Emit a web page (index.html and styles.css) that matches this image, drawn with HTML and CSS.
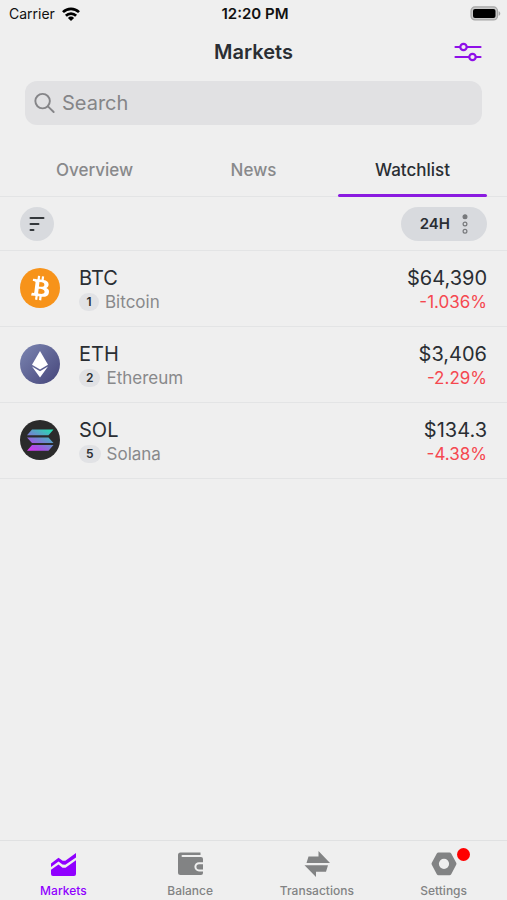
FILE: index.html
```html
<!DOCTYPE html>
<html lang="en">
<head>
<meta charset="utf-8">
<meta name="viewport" content="width=device-width, initial-scale=1">
<title>Markets</title>
<link rel="stylesheet" href="styles.css">
</head>
<body>
<div class="app">
  <div class="status">
    <div class="carrier">Carrier
      <svg class="wifi" width="18" height="14" viewBox="0 0 18 14" fill="none" stroke="#000" stroke-width="2.700"><path d="M1 5.100a11.500 11.500 0 0 1 16 0M3.900 8.700a7.200 7.200 0 0 1 10.200 0"/><path d="M9 14 5.900 10.900a4.400 4.400 0 0 1 6.200 0z" fill="#000" stroke="none"/></svg>
    </div>
    <div class="time">12:20 PM</div>
    <svg class="battery" width="31" height="15" viewBox="0 0 31 15"><rect x="1" y=".9" width="26.500" height="13" rx="4" fill="#c9c9c9" stroke="#a6a6a6" stroke-width="1.200"/><rect x="3" y="3" width="22.500" height="9" rx="2" fill="#000"/><path d="M28.600 5.200c2.200.7 2.200 3.900 0 4.600z" fill="#a6a6a6"/></svg>
  </div>

  <header class="header">
    <h1>Markets</h1>
    <button class="filter" aria-label="Filters">
      <svg width="28" height="20" viewBox="0 0 28 20" fill="none" stroke="#8f0fe8" stroke-width="2.200" stroke-linecap="round"><path d="M1.500 5H6M13 5h13.500M1.500 15H15M22 15h4.500"/><circle cx="9.500" cy="5" r="3.200"/><circle cx="18.500" cy="15" r="3.200"/></svg>
    </button>
  </header>

  <label class="search">
    <svg width="21" height="22" viewBox="0 0 22 22" fill="none" stroke="#858588" stroke-width="2" stroke-linecap="round"><circle cx="9" cy="9" r="7.600"/><path d="m14.600 14.600 6 5.800"/></svg>
    <input type="search" placeholder="Search" aria-label="Search">
  </label>

  <nav class="tabs">
    <a href="#overview">Overview</a>
    <a href="#news">News</a>
    <a href="#watchlist" class="active" aria-current="page">Watchlist</a>
  </nav>

  <div class="toolbar">
    <button class="sort" aria-label="Sort">
      <svg width="16" height="16" viewBox="0 0 16 16" stroke="#34383c" stroke-width="2.200" stroke-linecap="round"><path d="M1.600 2h12.800M1.600 8h7.800M1.600 14h2.800"/></svg>
    </button>
    <button class="period">24H
      <svg width="6" height="20" viewBox="0 0 6 20" fill="none" stroke="#77797c" stroke-width="1.200"><circle cx="3" cy="2.700" r="1.900" fill="#77797c"/><circle cx="3" cy="10" r="1.900"/><circle cx="3" cy="17.300" r="1.900"/></svg>
    </button>
  </div>

  <main>
    <ul class="coins">
      <li class="coin">
        <svg class="logo" viewBox="0 0 32 32"><circle cx="16" cy="16" r="16" fill="#f7931a"/><path fill="#fff" transform="rotate(-7 16 16)" d="M23.189 14.020c.314-2.096-1.283-3.223-3.465-3.975l.708-2.840-1.728-.430-.690 2.765c-.454-.114-.920-.220-1.385-.326l.695-2.783L15.596 6l-.708 2.839c-.376-.086-.746-.170-1.104-.260l.002-.009-2.384-.595-.460 1.846s1.283.294 1.256.312c.700.175.826.638.805 1.006l-.806 3.235c.048.012.110.030.180.057l-.183-.045-1.130 4.532c-.086.212-.303.531-.793.410.018.025-1.256-.313-1.256-.313l-.858 1.978 2.250.561c.418.105.828.215 1.231.318l-.715 2.872 1.727.430.708-2.840c.472.127.930.245 1.378.357l-.706 2.828 1.728.430.715-2.866c2.948.558 5.164.333 6.097-2.333.752-2.146-.037-3.385-1.588-4.192 1.130-.260 1.980-1.003 2.207-2.538zm-3.950 5.538c-.533 2.147-4.148.986-5.320.695l.950-3.805c1.172.293 4.929.872 4.370 3.110zm.535-5.569c-.487 1.953-3.495.960-4.470.717l.860-3.450c.975.243 4.118.696 3.610 2.733z"/></svg>
        <div class="name"><strong>BTC</strong><span class="sub"><span class="rank">1</span>Bitcoin</span></div>
        <div class="value"><strong>$64,390</strong><span class="change">-1.036%</span></div>
      </li>
      <li class="coin">
        <svg class="logo" viewBox="0 0 40 40"><defs><linearGradient id="eth" x1="0" y1="0" x2="1" y2="1"><stop offset="0" stop-color="#7c86b2"/><stop offset="1" stop-color="#45457a"/></linearGradient></defs><circle cx="20" cy="20" r="20" fill="url(#eth)"/><path fill="#fff" d="M20 7 28 20.800 20 25.400 12 20.800z"/><path fill="#fff" d="m12 22.600 8 4.600 8-4.600-8 10.900z"/></svg>
        <div class="name"><strong>ETH</strong><span class="sub"><span class="rank">2</span>Ethereum</span></div>
        <div class="value"><strong>$3,406</strong><span class="change">-2.29%</span></div>
      </li>
      <li class="coin">
        <svg class="logo" viewBox="0 0 40 40"><defs><linearGradient id="sol" gradientUnits="userSpaceOnUse" x1="29" y1="8" x2="15" y2="33"><stop offset="0" stop-color="#22e0b0"/><stop offset=".5" stop-color="#6f88d0"/><stop offset=".8" stop-color="#a94fe6"/><stop offset="1" stop-color="#d438f0"/></linearGradient></defs><circle cx="20" cy="20" r="20" fill="#2b2b2b"/><path fill="url(#sol)" d="M12 9.500h21.500l-5 5.700h-21.500zM7 17.400h21.500l5 5.500H12zM12 25.100h21.500l-5 5.700h-21.500z"/></svg>
        <div class="name"><strong>SOL</strong><span class="sub"><span class="rank">5</span>Solana</span></div>
        <div class="value"><strong>$134.3</strong><span class="change">-4.38%</span></div>
      </li>
    </ul>
  </main>

  <nav class="bottom">
    <a href="#markets" class="active" aria-current="page">
      <span class="icon"><svg width="26" height="26" viewBox="0 0 26 26" fill="currentColor"><path d="M1 11.500 8.500 5.800l4.200 2.900 2.600.1L26 1v4.500l-10.700 7.200-2.800-.2L8.500 9.400 1 15z"/><path d="M1 17.800 8.500 12.500l4 3.200h3L26 8.200V22a2 2 0 0 1-2 2H3a2 2 0 0 1-2-2z"/></svg></span>
      Markets
    </a>
    <a href="#balance">
      <span class="icon"><svg width="26" height="26" viewBox="0 0 26 26" fill="currentColor"><path d="M3.500.5h20V3H5.500a1 1 0 0 0 0 2H24a2 2 0 0 1 2 2v3.200h-4a4.600 4.600 0 0 0 0 9.200h4V21a2 2 0 0 1-2 2H3.500A2.500 2.500 0 0 1 1 20.500V3A2.500 2.500 0 0 1 3.500.5z"/><path d="M22 12.200h4v5.200h-4a2.600 2.600 0 0 1 0-5.200z"/></svg></span>
      Balance
    </a>
    <a href="#transactions">
      <span class="icon"><svg width="26" height="26" viewBox="0 0 26 26" fill="currentColor"><path d="M2.500 11 4.500 4.500h10V-1L26 11z"/><path d="M24 13.200 22 19.800H12v5.200L.5 13.200z"/></svg></span>
      Transactions
    </a>
    <a href="#settings">
      <span class="icon"><svg width="26" height="26" viewBox="0 0 26 26" fill="currentColor"><path fill-rule="evenodd" d="M7.500.5h11a2 2 0 0 1 1.700 1l5 9.300a2 2 0 0 1 0 2l-5 9.400a2 2 0 0 1-1.700 1h-11a2 2 0 0 1-1.700-1l-5-9.400a2 2 0 0 1 0-2l5-9.300a2 2 0 0 1 1.700-1zM13 6.700a5.100 5.100 0 1 0 0 10.200 5.100 5.100 0 0 0 0-10.200z"/></svg><span class="dot"></span></span>
      Settings
    </a>
  </nav>
</div>
</body>
</html>
```

FILE: styles.css
```css
* {
  box-sizing: border-box;
}

body {
  margin: 0;
  background: #efefef;
  color: #2a2e33;
  font-family: Inter, "Liberation Sans", sans-serif;
}

button {
  border: 0;
  padding: 0;
  background: none;
  color: inherit;
  font: inherit;
}

a {
  color: inherit;
  text-decoration: none;
}

svg {
  display: block;
  flex: none;
  overflow: visible;
}

.app {
  display: flex;
  flex-direction: column;
  min-height: 100vh;
}

.status {
  display: grid;
  grid-template-columns: 1fr auto 1fr;
  align-items: center;
  height: 27px;
  padding: 0 6px 0 9px;
  color: #111;
  font-size: 14px;
}

.carrier {
  display: flex;
  align-items: center;
  gap: 7px;
}

.time {
  font-size: 15px;
  font-weight: 600;
}

.battery {
  justify-self: end;
}

.header {
  display: grid;
  grid-template-columns: 1fr auto 1fr;
  align-items: center;
  height: 50px;
  padding: 0 25px;
}

.header h1 {
  grid-column: 2;
  margin: 0;
  font-size: 20px;
  font-weight: 600;
}

.filter {
  justify-self: end;
}

.search {
  display: flex;
  align-items: center;
  gap: 7px;
  height: 44px;
  margin: 4px 25px 0;
  padding: 0 9px;
  border-radius: 12px;
  background: #e1e1e3;
}

.search input {
  flex: 1;
  min-width: 0;
  padding: 0;
  border: 0;
  outline: 0;
  background: none;
  color: inherit;
  font: inherit;
  font-size: 20px;
}

.search input::placeholder {
  color: #858588;
  opacity: 1;
}

.tabs {
  display: grid;
  grid-template-columns: repeat(3, 1fr);
  gap: 10px;
  height: 72px;
  padding: 0 20px;
  border-bottom: 1px solid #e3e4e5;
  color: #88898b;
  font-size: 17px;
  font-weight: 500;
}

.tabs a {
  position: relative;
  display: flex;
  align-items: center;
  justify-content: center;
  height: 72px;
  padding-top: 18px;
}

.tabs .active {
  color: #2a2e33;
}

.tabs .active::after {
  content: "";
  position: absolute;
  inset: auto 0 0;
  height: 3px;
  border-radius: 2px;
  background: #8a1be0;
}

.toolbar {
  display: flex;
  align-items: center;
  justify-content: space-between;
  height: 54px;
  padding: 0 20px;
  border-bottom: 1px solid #e3e4e5;
}

.sort {
  display: grid;
  place-items: center;
  width: 34px;
  height: 34px;
  border-radius: 50%;
  background: #d8dade;
}

.period {
  display: flex;
  align-items: center;
  gap: 12px;
  height: 34px;
  padding: 0 19px;
  border-radius: 17px;
  background: #d8dade;
  font-size: 15px;
  font-weight: 600;
}

main {
  flex: 1;
}

.coins {
  margin: 0;
  padding: 0;
  list-style: none;
}

.coin {
  display: flex;
  align-items: center;
  gap: 19px;
  padding: 13px 20px 14px;
  border-bottom: 1px solid #e3e4e5;
}

.logo {
  width: 40px;
  height: 40px;
}

.name,
.value {
  display: flex;
  flex-direction: column;
}

.value {
  align-items: flex-end;
  margin-left: auto;
}

.coin strong {
  font-size: 20px;
  font-weight: 400;
  line-height: 28px;
}

.sub,
.change {
  display: flex;
  align-items: center;
  font-size: 17px;
  line-height: 20px;
}

.sub {
  gap: 6px;
  color: #88898b;
}

.change {
  color: #f5484f;
}

.rank {
  min-width: 20px;
  padding: 0 7px;
  border-radius: 9px;
  background: #e1e2e5;
  color: #2a2e33;
  font-size: 12px;
  font-weight: 600;
  line-height: 18px;
  text-align: center;
}

.bottom {
  position: sticky;
  bottom: 0;
  display: grid;
  grid-template-columns: repeat(4, 1fr);
  height: 60px;
  padding-top: 11px;
  border-top: 1px solid #e0e1e2;
  background: #efefef;
  color: #828384;
  font-size: 12px;
  font-weight: 500;
}

.bottom a {
  display: flex;
  flex-direction: column;
  align-items: center;
  gap: 5px;
  line-height: 16px;
}

.bottom .active {
  color: #9000ff;
}

.icon {
  position: relative;
}

.dot {
  position: absolute;
  top: -4px;
  right: -13px;
  width: 13px;
  height: 13px;
  border-radius: 50%;
  background: #f00;
}
```
